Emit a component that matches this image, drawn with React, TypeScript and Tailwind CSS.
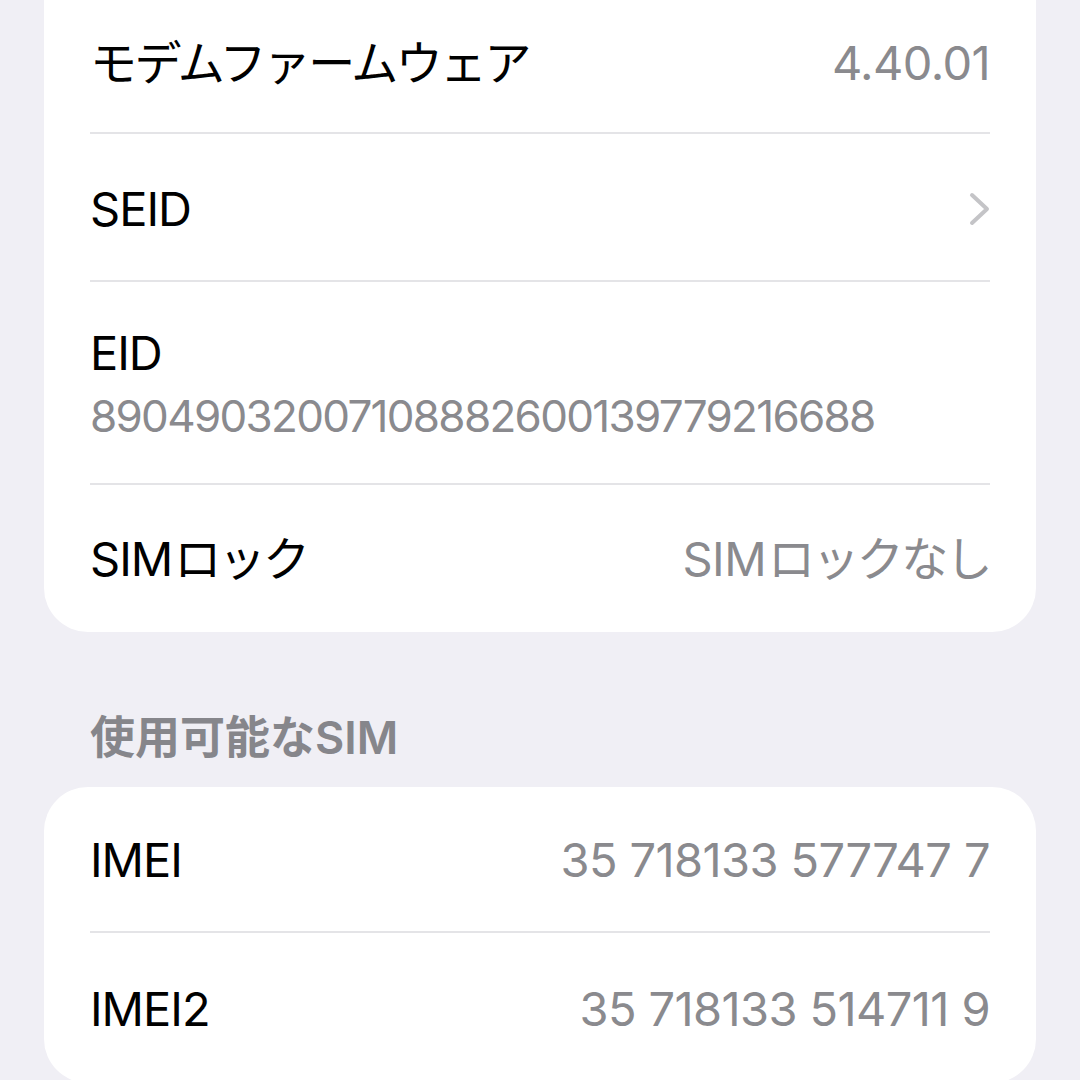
import type { ReactNode } from "react";

const font = { fontFamily: '"Inter", "Noto Sans CJK JP", sans-serif' };

function J({ children, className }: { children: ReactNode; className?: string }) {
  return <span className={`tracking-[-2.6px] ${className ?? ""}`}>{children}</span>;
}

function Row({ label, value, chevron, className }: { label: ReactNode; value?: ReactNode; chevron?: boolean; className?: string }) {
  return (
    <div className={`flex items-center justify-between ${className ?? "h-[147px]"}`}>
      <span className="text-black">{label}</span>
      {value && <span className="text-[#8a8a8e] tracking-[-0.6px]">{value}</span>}
      {chevron && (
        <svg width="22" height="34" viewBox="0 0 22 34" className="mr-[-1px]">
          <path d="M3 3 L18 17 L3 31" fill="none" stroke="#c4c4c7" strokeWidth="4" strokeLinecap="round" strokeLinejoin="round" />
        </svg>
      )}
    </div>
  );
}

function Sep() {
  return <div className="h-[2px] bg-[#e4e4e7]" />;
}

export default function App() {
  return (
    <div className="w-[1080px] h-[1080px] overflow-hidden bg-[#f0eff5] px-[44px] text-[47px] leading-none tracking-[-1px]" style={font}>
      <div className="bg-white rounded-b-[44px] px-[46px]">
        <Row label={<J>モデムファームウェア</J>} value="4.40.01" className="h-[132px] pb-[8px]" />
        <Sep />
        <Row label="SEID" chevron className="h-[146px] pt-[3px]" />
        <Sep />
        <div className="h-[201px] flex flex-col justify-center pt-[2px]">
          <div className="text-black">EID</div>
          <div className="text-[#8a8a8e] text-[44px] mt-[18px] tracking-[-1.7px]">89049032007108882600139779216688</div>
        </div>
        <Sep />
        <Row
          label={<>SIM<J className="ml-[2px]">ロック</J></>}
          value={<>SIM<J className="ml-[2px]">ロックなし</J></>}
          className="h-[147px]"
        />
      </div>
      <div className="h-[155px] flex items-end pb-[27px] pl-[46px] text-[#86868b] font-semibold text-[45px] tracking-normal">
        使用可能なSIM
      </div>
      <div className="bg-white rounded-[44px] px-[46px]">
        <Row label="IMEI" value="35 718133 577747 7" className="h-[144px]" />
        <Sep />
        <Row label="IMEI2" value="35 718133 514711 9" className="h-[150px]" />
      </div>
    </div>
  );
}
